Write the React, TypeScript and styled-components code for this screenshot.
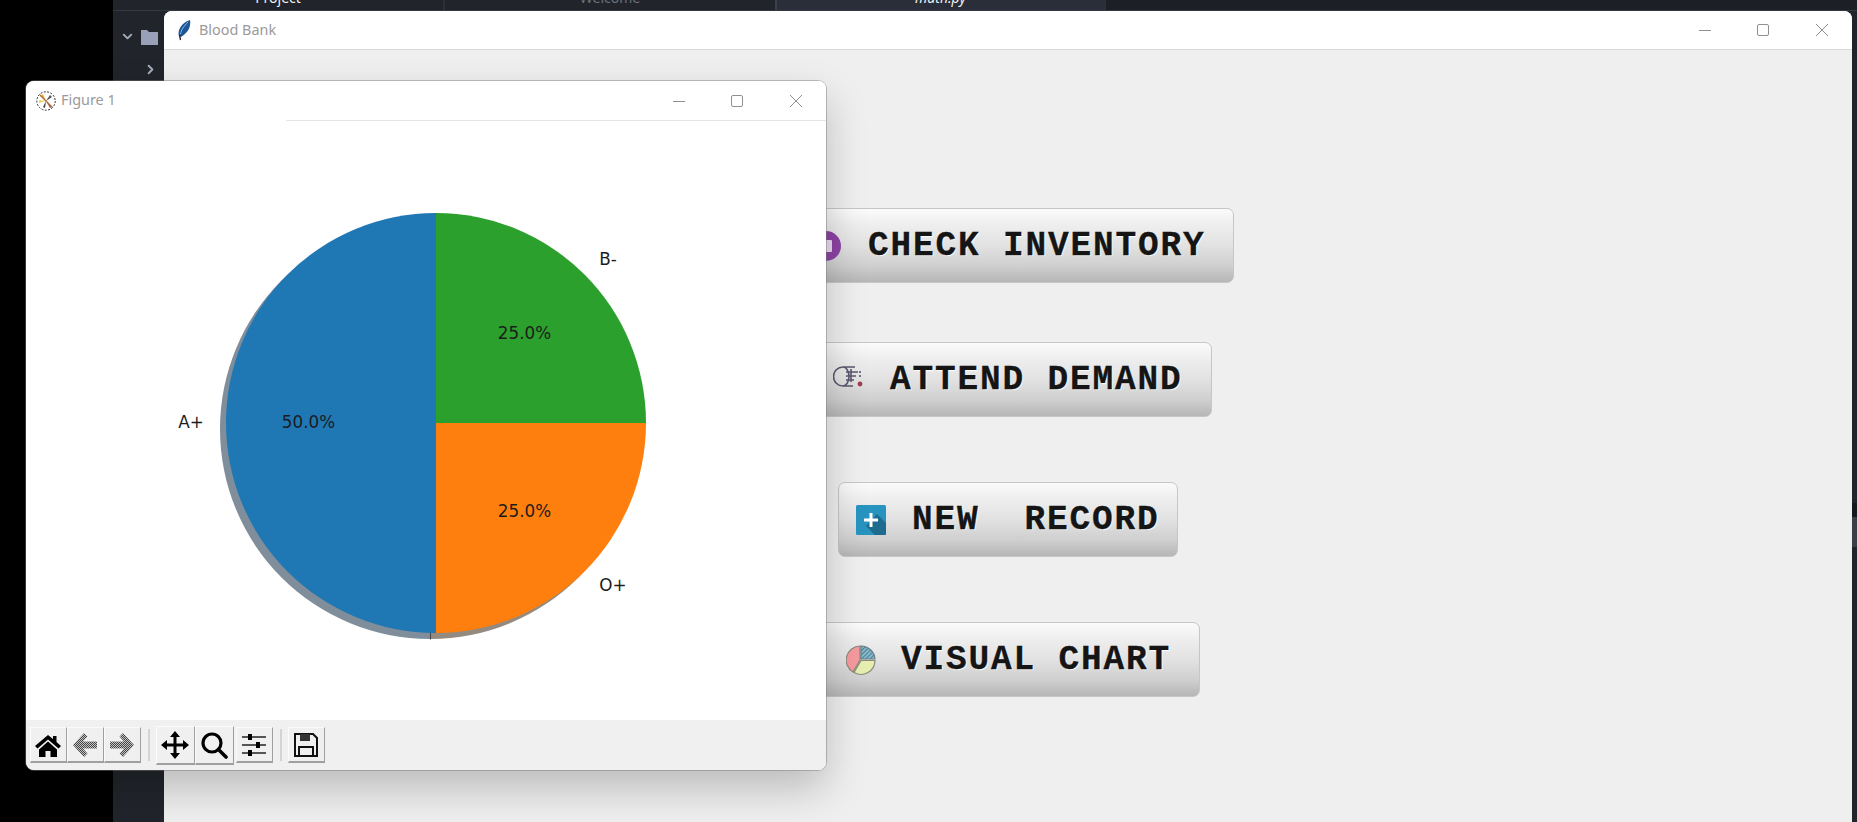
import React from "react";
import styled, { createGlobalStyle } from "styled-components";
import { ChevronDown, ChevronRight } from "lucide-react";

const Global = createGlobalStyle`
  html, body { margin: 0; padding: 0; background: #000; overflow: hidden; }
  #root { width: 1857px; height: 822px; }
  * { box-sizing: border-box; }
`;

const Desktop = styled.div`
  position: relative;
  width: 1857px;
  height: 822px;
  display: flex;
  overflow: hidden;
  background: #000;
`;
const BlackRail = styled.div`
  width: 113px;
  flex: none;
`;
const Ide = styled.div`
  flex: 1;
  display: flex;
  flex-direction: column;
  background: #21252b;
`;
const TabStrip = styled.div`
  height: 11px;
  flex: none;
  display: flex;
  overflow: hidden;
  background: #1c1f26;
  border-bottom: 1px solid #333842;
`;
const Tab = styled.div<{ $active?: boolean; $dim?: boolean }>`
  width: ${(p) => (p.$active ? 329 : 332)}px;
  flex: none;
  display: flex;
  justify-content: center;
  background: ${(p) => (p.$active ? "#2a2e38" : "#21252b")};
  border-right: 2px solid ${(p) => (p.$dim ? "#3c404a" : "#2b2f37")};
  color: ${(p) => (p.$dim ? "#6b707b" : "#f2f2f2")};
  font: ${(p) => (p.$active ? "italic" : "normal")} 14px/14px "Noto Sans", sans-serif;
`;
const TabLabel = styled.span`
  margin-top: -9px;
`;
const Tree = styled.div`
  padding-top: 9px;
  color: #a4abba;
`;
const TreeRow = styled.div<{ $indent: number }>`
  height: 33px;
  display: flex;
  align-items: center;
  gap: 4px;
  padding-left: ${(p) => p.$indent}px;
`;
const BlueMark = styled.div`
  width: 4px;
  height: 14px;
  margin-left: 2px;
  background: #3f7fc4;
`;
const ScrollTrack = styled.div`
  position: absolute;
  right: 0;
  top: 503px;
  width: 5px;
  height: 14px;
  background: #15181c;
`;
const ScrollThumb = styled.div`
  position: absolute;
  right: 0;
  top: 517px;
  width: 5px;
  height: 30px;
  background: #3b3e46;
`;

const MainWindow = styled.div`
  position: absolute;
  left: 164px;
  top: 11px;
  width: 1688px;
  height: 811px;
  display: flex;
  flex-direction: column;
  background: #efefef;
  border-radius: 8px 8px 0 0;
  overflow: hidden;
`;
const TitleBar = styled.div`
  height: 39px;
  flex: none;
  display: flex;
  align-items: center;
  background: #fff;
  border-bottom: 1px solid #d9d9d9;
`;
const FigureTitleBar = styled.div`
  height: 39px;
  flex: none;
  display: flex;
  align-items: center;
  background: #fff;
`;
const AppIcon = styled.svg`
  flex: none;
  margin-left: 11px;
  margin-right: 6px;
`;
const FigureIcon = styled.svg`
  flex: none;
  margin-left: 10px;
  margin-right: 5px;
`;
const WindowTitle = styled.span`
  font: 14.4px/20px "Noto Sans", sans-serif;
  color: #9a9a9a;
  flex: 1;
  padding-bottom: 1px;
`;
const Controls = styled.div<{ $pad: number }>`
  display: flex;
  align-items: center;
  padding-right: ${(p) => p.$pad}px;
`;
const Control = styled.svg`
  flex: none;
  width: 58px;
  height: 14px;
`;
const Content = styled.div`
  flex: 1;
  display: flex;
  flex-direction: column;
  align-items: flex-start;
  padding-top: 158px;
`;
const ActionButton = styled.div<{ $left: number; $width: number; $top: number; $pad: number; $gap: number }>`
  margin-left: ${(p) => p.$left}px;
  margin-top: ${(p) => p.$top}px;
  width: ${(p) => p.$width}px;
  height: 75px;
  flex: none;
  display: flex;
  align-items: center;
  padding-left: ${(p) => p.$pad}px;
  gap: ${(p) => p.$gap}px;
  border: 1px solid #c6c6c6;
  border-radius: 7px;
  background: linear-gradient(180deg, #fbfbfb 0%, #eeeeee 22%, #e2e2e2 50%, #cfcfcf 78%, #b6b6b6 100%);
`;
const ActionIcon = styled.svg`
  flex: none;
  width: 30px;
  height: 32px;
`;
const ActionLabel = styled.span`
  font: bold 34.5px/40px "Liberation Mono", "Courier New", monospace;
  letter-spacing: 1.8px;
  white-space: pre;
  color: #151515;
  -webkit-text-stroke: 0.3px #151515;
  text-shadow: 1px 1px 1px #fff;
`;

const FigureWindow = styled.div`
  position: absolute;
  left: 26px;
  top: 81px;
  width: 800px;
  height: 689px;
  display: flex;
  flex-direction: column;
  background: #fff;
  border-radius: 8px;
  overflow: hidden;
`;
const FigureShadow = styled.div`
  position: absolute;
  left: 26px;
  top: 81px;
  width: 800px;
  height: 689px;
  border-radius: 8px;
  box-shadow: 0 0 0 1px rgba(120, 120, 120, 0.45), 0 18px 40px rgba(0, 0, 0, 0.22);
`;
const TitleRule = styled.div`
  height: 1px;
  flex: none;
  margin-left: 260px;
  background: #e4e4e4;
`;
const Canvas = styled.svg`
  display: block;
  flex: 1;
  width: 800px;
  min-height: 0;
`;
const Toolbar = styled.div`
  height: 50px;
  flex: none;
  display: flex;
  align-items: center;
  padding-left: 4px;
  background: #f0f0f0;
`;
const ToolButton = styled.div<{ $wide?: boolean; $shift?: number }>`
  width: ${(p) => (p.$wide ? 39 : 37)}px;
  height: ${(p) => (p.$wide ? 39 : 36)}px;
  flex: none;
  display: flex;
  align-items: center;
  justify-content: center;
  padding-right: ${(p) => (p.$wide ? 1 : 2)}px;
  margin-left: ${(p) => p.$shift ?? 0}px;
  background: #f0f0f0;
  border-top: 1px solid #fbfbfb;
  border-left: 1px solid #fbfbfb;
  border-right: 1px solid #9f9f9f;
  border-bottom: 2px solid #9f9f9f;
`;
const ToolIcon = styled.svg`
  width: 28px;
  height: 28px;
`;
const ToolSep = styled.div`
  width: 2px;
  height: 32px;
  flex: none;
  margin: 0 6px 0 7px;
  background: #d4d4d4;
`;
const PieLabel = styled.text`
  font: 16.8px "DejaVu Sans", sans-serif;
  fill: #1c1c1c;
  text-anchor: middle;
  dominant-baseline: central;
`;

const WinControls = () => (
  <>
    <Control viewBox="0 0 58 14">
      <path d="M22 7.500H34" stroke="#8f8f8f" strokeWidth="1" />
    </Control>
    <Control viewBox="0 0 58 14">
      <rect x="22.500" y="1.500" width="11" height="11" rx="1.500" fill="none" stroke="#8f8f8f" strokeWidth="1" />
    </Control>
    <Control viewBox="0 0 58 14">
      <path d="M23 1L35 13M35 1L23 13" stroke="#8f8f8f" strokeWidth="1" />
    </Control>
  </>
);

export default function App() {
  return (
    <Desktop>
      <Global />
      <BlackRail />
      <Ide>
        <TabStrip>
          <Tab>
            <TabLabel>Project</TabLabel>
          </Tab>
          <Tab $dim>
            <TabLabel>Welcome</TabLabel>
          </Tab>
          <Tab $active>
            <TabLabel>math.py</TabLabel>
          </Tab>
        </TabStrip>
        <Tree>
          <TreeRow $indent={7}>
            <ChevronDown size={15} strokeWidth={3} />
            <svg width="20" height="18" viewBox="0 0 20 18">
              <path d="M2 2h6l2 2h9v13H2z" fill="#99a1b8" />
            </svg>
          </TreeRow>
          <TreeRow $indent={30}>
            <ChevronRight size={15} strokeWidth={3} />
            <BlueMark />
          </TreeRow>
        </Tree>
      </Ide>
      <ScrollTrack />
      <ScrollThumb />

      <MainWindow>
        <TitleBar>
          <AppIcon width="18" height="22" viewBox="0 0 18 22">
            <path d="M4 17C2 12 6 4 15 1c1 6-1 12-9 17z" fill="#1f5796" />
            <path d="M5.500 15C6 11 9 7 13 3" stroke="#8fbbe8" strokeWidth="1" fill="none" />
            <path d="M4.500 16l1 5" stroke="#222" strokeWidth="1.300" />
          </AppIcon>
          <WindowTitle>Blood Bank</WindowTitle>
          <Controls $pad={1}>
            <WinControls />
          </Controls>
        </TitleBar>
        <Content>
          <ActionButton $left={629} $width={441} $top={0} $pad={17} $gap={27}>
            <ActionIcon viewBox="0 0 30 32">
              <circle cx="15" cy="16" r="15" fill="#8e44a5" />
              <rect x="9" y="10" width="12" height="12" rx="1" fill="#eadcf0" />
            </ActionIcon>
            <ActionLabel>CHECK INVENTORY</ActionLabel>
          </ActionButton>
          <ActionButton $left={651} $width={397} $top={59} $pad={17} $gap={27}>
            <ActionIcon viewBox="0 0 30 32">
              <g fill="none" stroke="#5c566e" strokeWidth="1.600">
                <path d="M22 3H10a9.500 9.500 0 0 0 0 19H20M10 3a6 9.500 0 0 1 0 19" />
                <path d="M13 8h12M13 12h10M13 16h8M18 5v13" />
              </g>
              <path d="M27 7v2M27 11v2" stroke="#5c566e" strokeWidth="1.600" />
              <circle cx="27" cy="20" r="2.400" fill="#a33c55" />
            </ActionIcon>
            <ActionLabel>ATTEND DEMAND</ActionLabel>
          </ActionButton>
          <ActionButton $left={674} $width={340} $top={65} $pad={17} $gap={26}>
            <ActionIcon viewBox="0 0 30 32">
              <rect y="1" width="30" height="30" rx="1.500" fill="#2794c0" />
              <path d="M21 10L30 19V29.500a1.500 1.500 0 0 1-1.500 1.500H19L10 22z" fill="#1d6c90" />
              <path d="M15 9V23M8 16H22" stroke="#fff" strokeWidth="3" />
            </ActionIcon>
            <ActionLabel>{"NEW  RECORD"}</ActionLabel>
          </ActionButton>
          <ActionButton $left={651} $width={385} $top={65} $pad={30} $gap={25}>
            <ActionIcon viewBox="0 0 30 32">
              <defs>
                <pattern id="hatch" width="3" height="3" patternUnits="userSpaceOnUse" patternTransform="rotate(45)">
                  <rect width="3" height="3" fill="#8cc0cf" />
                  <rect width="1.200" height="3" fill="#4d7f93" />
                </pattern>
              </defs>
              <path d="M14 2A14 14 0 0 0 7 28L14 16z" fill="#f69a9e" stroke="#8a8a7a" strokeWidth="1.200" />
              <path d="M15 2A14 14 0 0 1 29 15H15z" fill="url(#hatch)" stroke="#6a7f88" strokeWidth="1.200" />
              <path d="M15 16.500H29A14 14 0 0 1 8 28.500z" fill="#e6eeb0" stroke="#8a8a7a" strokeWidth="1.200" />
            </ActionIcon>
            <ActionLabel>VISUAL CHART</ActionLabel>
          </ActionButton>
        </Content>
      </MainWindow>

      <FigureShadow />
      <FigureWindow>
        <FigureTitleBar>
          <FigureIcon width="20" height="20" viewBox="0 0 20 20">
            <circle cx="10" cy="10" r="9.200" fill="#fff" stroke="#333" strokeWidth="1" strokeDasharray="2 1.400" />
            <path d="M10 10L4 5l3-2z" fill="#e8b94a" />
            <path d="M10 10L3 12l0-3z" fill="#e8d26a" />
            <path d="M10 10l6 6-2 1z" fill="#a0583a" />
            <path d="M10 10l4-6 2 2z" fill="#555" />
            <path d="M10 10l-3 6 2 1z" fill="#444" />
            <path d="M4 4l12 12" stroke="#b06a3c" strokeWidth="1.200" />
          </FigureIcon>
          <WindowTitle>Figure 1</WindowTitle>
          <Controls $pad={1}>
            <WinControls />
          </Controls>
        </FigureTitleBar>
        <TitleRule />
        <Canvas viewBox="26 121 800 599">
          <g transform="translate(-6 6)">
            <path d="M436 213A210 210 0 0 0 436 633z" fill="#7f8e9a" />
            <path d="M436 423V633A210 210 0 0 0 646 423z" fill="#948a7f" />
          </g>
          <path d="M430.500 632V639.500" stroke="#444" strokeWidth="1" />
          <path d="M436 213A210 210 0 0 0 436 633z" fill="#1f77b4" />
          <path d="M436 423V633A210 210 0 0 0 646 423z" fill="#ff7f0e" />
          <path d="M436 423H646A210 210 0 0 0 436 213z" fill="#2ca02c" />
          <PieLabel x="191" y="422">A+</PieLabel>
          <PieLabel x="308.500" y="422">50.0%</PieLabel>
          <PieLabel x="524.500" y="333">25.0%</PieLabel>
          <PieLabel x="524.500" y="511">25.0%</PieLabel>
          <PieLabel x="608" y="259">B-</PieLabel>
          <PieLabel x="613" y="585">O+</PieLabel>
        </Canvas>
        <Toolbar>
          <ToolButton>
            <ToolIcon viewBox="0 0 28 28">
              <path d="M14 4L1 15l2.500 2.500L14 8.500l10.500 9L27 15l-4.500-4V5H19v3z" fill="#000" />
              <path d="M5 18.500L14 10.500l9 8V26h-6.500v-6h-5v6H5z" fill="#000" />
            </ToolIcon>
          </ToolButton>
          <ToolButton>
            <ToolIcon viewBox="0 0 28 28">
              <defs>
                <pattern id="dither" width="2" height="2" patternUnits="userSpaceOnUse">
                  <rect width="2" height="2" fill="#c4c4c4" />
                  <rect width="1" height="1" fill="#444" />
                  <rect x="1" y="1" width="1" height="1" fill="#444" />
                </pattern>
              </defs>
              <path d="M2 14L13 2l3.500 3.500L12 10.500H26v7H12l4.500 5L13 26z" fill="url(#dither)" />
            </ToolIcon>
          </ToolButton>
          <ToolButton>
            <ToolIcon viewBox="0 0 28 28">
              <path d="M26 14L15 2l-3.500 3.500L16 10.500H2v7h14l-4.500 5L15 26z" fill="url(#dither)" />
            </ToolIcon>
          </ToolButton>
          <ToolSep />
          <ToolButton $wide>
            <ToolIcon viewBox="0 0 28 28">
              <path d="M14 5V23M5 14H23" stroke="#000" strokeWidth="3" />
              <path d="M14 0l5 6H9zM14 28l5-6H9zM0 14l6-5v10zM28 14l-6-5v10z" fill="#000" />
            </ToolIcon>
          </ToolButton>
          <ToolButton $wide>
            <ToolIcon viewBox="0 0 28 28">
              <circle cx="12" cy="12" r="9" fill="none" stroke="#000" strokeWidth="3.200" />
              <path d="M18.500 18.500L26 26" stroke="#000" strokeWidth="3.600" strokeLinecap="round" />
            </ToolIcon>
          </ToolButton>
          <ToolButton $shift={2}>
            <ToolIcon viewBox="0 0 28 28">
              <path d="M2 6H26M2 14H26M2 22H26" stroke="#222" strokeWidth="1.600" />
              <path d="M8 3h4v6H8zM16 11h4v6h-4zM8 19h4v6H8z" fill="#000" />
            </ToolIcon>
          </ToolButton>
          <ToolSep />
          <ToolButton>
            <ToolIcon viewBox="0 0 28 28">
              <path d="M3 3H21L25 7V25H3z" fill="none" stroke="#111" strokeWidth="2" />
              <path d="M8 3h10v7H8z" fill="#333" />
              <path d="M7 25v-9h14v9" fill="none" stroke="#111" strokeWidth="2" />
            </ToolIcon>
          </ToolButton>
        </Toolbar>
      </FigureWindow>
    </Desktop>
  );
}
